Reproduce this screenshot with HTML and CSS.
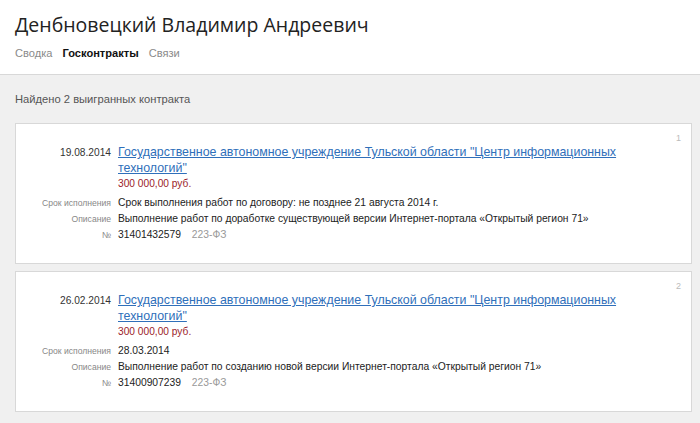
FILE: index.html
```html
<!DOCTYPE html>
<html lang="ru">
<head>
<meta charset="utf-8">
<link rel="stylesheet" href="styles.css">
</head>
<body>
<header class="head">
  <h1 class="title">Денбновецкий Владимир Андреевич</h1>
  <nav class="tabs">
    <span class="tab">Сводка</span>
    <span class="tab active">Госконтракты</span>
    <span class="tab">Связи</span>
  </nav>
</header>
<main class="content">
  <div class="found">Найдено 2 выигранных контракта</div>
  <section class="card">
    <span class="num">1</span>
    <div class="row main-row">
      <div class="label date">19.08.2014</div>
      <div class="value">
        <a class="link" href="#">Государственное автономное учреждение Тульской области "Центр информационных технологий"</a>
        <div class="price">300 000,00 руб.</div>
      </div>
    </div>
    <div class="row">
      <div class="label">Срок исполнения</div>
      <div class="value text">Срок выполнения работ по договору: не позднее 21 августа 2014 г.</div>
    </div>
    <div class="row">
      <div class="label">Описание</div>
      <div class="value text">Выполнение работ по доработке существующей версии Интернет-портала «Открытый регион 71»</div>
    </div>
    <div class="row">
      <div class="label">№</div>
      <div class="value text">31401432579 <span class="law">223-ФЗ</span></div>
    </div>
  </section>
  <section class="card">
    <span class="num">2</span>
    <div class="row main-row">
      <div class="label date">26.02.2014</div>
      <div class="value">
        <a class="link" href="#">Государственное автономное учреждение Тульской области "Центр информационных технологий"</a>
        <div class="price">300 000,00 руб.</div>
      </div>
    </div>
    <div class="row">
      <div class="label">Срок исполнения</div>
      <div class="value text">28.03.2014</div>
    </div>
    <div class="row">
      <div class="label">Описание</div>
      <div class="value text">Выполнение работ по созданию новой версии Интернет-портала «Открытый регион 71»</div>
    </div>
    <div class="row">
      <div class="label">№</div>
      <div class="value text">31400907239 <span class="law">223-ФЗ</span></div>
    </div>
  </section>
</main>
</body>
</html>
```
FILE: styles.css
```css
html, body {
  margin: 0;
  padding: 0;
}
body {
  font-family: "Liberation Sans", Arial, sans-serif;
  background: #f0f0f0;
  color: #333;
  width: 700px;
  height: 423px;
  overflow: hidden;
}
.head {
  background: #fff;
  border-bottom: 1px solid #d8d8d8;
  padding: 12px 15px 0;
  height: 62px;
}
.title {
  margin: 0;
  font-family: "Open Sans", sans-serif;
  font-weight: 400;
  font-size: 19.5px;
  line-height: 26px;
  color: #222;
}
.tabs {
  display: flex;
  gap: 10px;
  margin-top: 8px;
  font-size: 11.1px;
  line-height: 14px;
}
.tab {
  color: #8a8a8a;
}
.tab.active {
  color: #111;
  font-weight: bold;
}
.content {
  padding: 16px 8px 0 15px;
}
.found {
  font-size: 11.2px;
  line-height: 16px;
  color: #555;
  margin-bottom: 16px;
}
.card {
  position: relative;
  background: #fff;
  border: 1px solid #d8d8d8;
  padding: 20px 0 20px;
  margin-bottom: 7px;
}
.num {
  position: absolute;
  top: 9px;
  right: 10px;
  font-size: 9px;
  line-height: 10px;
  color: #bbb;
}
.row {
  display: flex;
  gap: 7px;
  align-items: baseline;
  height: 16px;
}
.main-row {
  height: auto;
  margin-bottom: 4px;
}
.label {
  width: 95px;
  flex: none;
  text-align: right;
  font-size: 8.6px;
  color: #888;
  line-height: 16px;
}
.label.date {
  font-size: 10.2px;
  color: #333;
}
.value {
  width: 510px;
  font-size: 12.4px;
  line-height: 16px;
}
.link {
  color: #2f6fba;
  text-decoration: underline;
}
.price {
  font-size: 10.2px;
  line-height: 15px;
  color: #9b1b2a;
}
.value.text {
  font-size: 10.3px;
  line-height: 16px;
  color: #222;
}
.law {
  color: #999;
  margin-left: 8px;
}
```
